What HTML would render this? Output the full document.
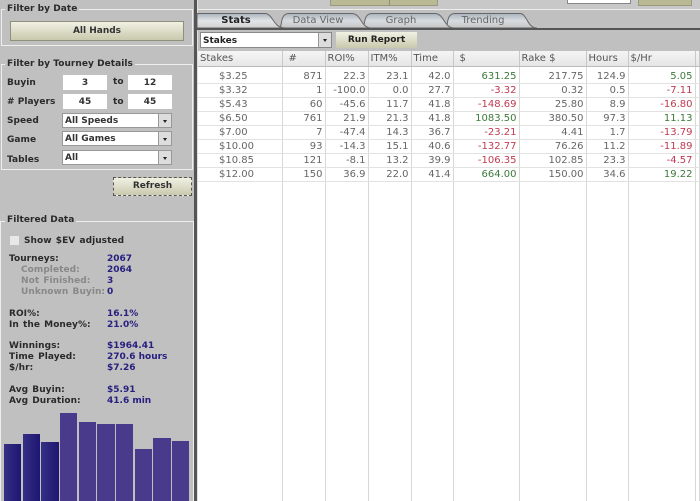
<!DOCTYPE html>
<html><head><meta charset="utf-8">
<style>
html,body{margin:0;padding:0;width:700px;height:501px;overflow:hidden;background:#c0c0c0}
body{position:relative;font-family:"DejaVu Sans","Liberation Sans",sans-serif;font-size:9px;color:#222;filter:blur(.3px)}
.a{position:absolute;white-space:nowrap}
.b{font-weight:bold}
.t{position:absolute;white-space:nowrap;font-weight:bold;font-size:9px;letter-spacing:.05px;color:#2a2a2a;line-height:12px}
.box{position:absolute;border:1px solid #eee;box-sizing:border-box}
.leg{position:absolute;background:#c0c0c0;font-weight:bold;font-size:9px;letter-spacing:.05px;line-height:12px;padding:0 2px;white-space:nowrap;color:#2a2a2a}
.inp{position:absolute;background:#fff;text-align:center;font-weight:bold;font-size:9px;line-height:16px;height:15px;width:44px;color:#333}
.sel{position:absolute;left:62px;width:110px;height:15px;background:#fff;border:1px solid #999;box-sizing:border-box;font-weight:bold;font-size:9px;line-height:15px;padding-left:2px;color:#333}
.sel i{position:absolute;right:0;top:0;width:12px;height:13px;background:#ddd;border-left:1px solid #999}
.sel i:after{content:"";position:absolute;left:4px;top:6px;border:2px solid transparent;border-top:3px solid #222;border-bottom:0}
.btn{position:absolute;background:linear-gradient(#f1f1e4,#c9c9ae);box-sizing:border-box;border:1px solid #8f8f7c;text-align:center;font-weight:bold;font-size:9px;color:#333}
.bar{position:absolute;bottom:0;background:#4a3a8c}
.bd{background:linear-gradient(90deg,#352f85,#1e1670)}
.k{position:absolute;left:9px;white-space:nowrap;font-weight:bold;font-size:9px;letter-spacing:.05px;word-spacing:1px;line-height:11px;color:#2a2a2a}
.g{color:#888}
.v{position:absolute;left:107px;white-space:nowrap;font-weight:bold;font-size:9px;letter-spacing:0;line-height:11px;color:#27207f}
table{position:absolute;left:198px;top:51px;border-collapse:collapse;table-layout:fixed;width:501px;background:#fff;font-size:10px;color:#666}
td,th{padding:0 2px 0 3px;border-right:1px solid #d8d8d8;height:13px;line-height:13px;border-bottom:1px solid #e2e2e2;overflow:hidden;white-space:nowrap;text-align:right;box-sizing:border-box}
th{font-weight:normal;text-align:left;height:15px;background:linear-gradient(#f5f5f5,#e6e6e6);color:#555;border-right:1px solid #c8c8c8;border-bottom:1px solid #bbb;padding-left:2px}
td:first-child{text-align:left;padding-left:21px}
tr.f td{padding-top:3px;height:17px}
.p{color:#3c7a3c}.n{color:#c03a50}
.tl{position:absolute;top:14px;line-height:13px;font-size:10px;color:#666;white-space:nowrap;transform:translateX(-50%)}
</style></head><body>

<!-- sidebar -->
<div class="box" style="left:1px;top:9px;width:192px;height:37px"></div>
<div class="leg" style="left:5px;top:3px">Filter by Date</div>
<div class="btn" style="left:10px;top:21px;width:174px;height:20px;line-height:19px">All Hands</div>

<div class="box" style="left:1px;top:64px;width:192px;height:106px"></div>
<div class="leg" style="left:5px;top:58px">Filter by Tourney Details</div>
<div class="t" style="left:7px;top:77px">Buyin</div>
<div class="inp" style="left:63px;top:75px">3</div>
<div class="t" style="left:113px;top:76px">to</div>
<div class="inp" style="left:128px;top:75px">12</div>
<div class="t" style="left:7px;top:96px"># Players</div>
<div class="inp" style="left:63px;top:94px">45</div>
<div class="t" style="left:113px;top:96px">to</div>
<div class="inp" style="left:128px;top:94px">45</div>
<div class="t" style="left:7px;top:115px">Speed</div>
<div class="sel" style="top:113px">All Speeds<i></i></div>
<div class="t" style="left:7px;top:134px">Game</div>
<div class="sel" style="top:131px">All Games<i></i></div>
<div class="t" style="left:7px;top:154px">Tables</div>
<div class="sel" style="top:150px">All<i></i></div>
<div class="btn" style="left:113px;top:177px;width:79px;height:19px;line-height:17px;border:1px dashed #555">Refresh</div>

<div class="box" style="left:0;top:221px;width:194px;height:290px;border-right:1px solid #eee"></div>
<div class="leg" style="left:5px;top:214px">Filtered Data</div>
<div class="a" style="left:10px;top:236px;width:9px;height:9px;background:#e8e8e8"></div>
<div class="k" style="left:24px;top:236px">Show $EV adjusted</div>
<div class="k" style="top:254px">Tourneys:</div><div class="v" style="top:254px">2067</div>
<div class="k g" style="left:21px;top:265px">Completed:</div><div class="v" style="top:265px">2064</div>
<div class="k g" style="left:21px;top:276px">Not Finished:</div><div class="v" style="top:276px">3</div>
<div class="k g" style="left:21px;top:287px">Unknown Buyin:</div><div class="v" style="top:287px">0</div>
<div class="k" style="top:309px">ROI%:</div><div class="v" style="top:309px">16.1%</div>
<div class="k" style="top:320px">In the Money%:</div><div class="v" style="top:320px">21.0%</div>
<div class="k" style="top:341px">Winnings:</div><div class="v" style="top:341px">$1964.41</div>
<div class="k" style="top:352px">Time Played:</div><div class="v" style="top:352px">270.6 hours</div>
<div class="k" style="top:363px">$/hr:</div><div class="v" style="top:363px">$7.26</div>
<div class="k" style="top:385px">Avg Buyin:</div><div class="v" style="top:385px">$5.91</div>
<div class="k" style="top:396px">Avg Duration:</div><div class="v" style="top:396px">41.6 min</div>

<div class="bar bd" style="left:4px;width:17px;height:57px"></div>
<div class="bar bd" style="left:23px;width:17px;height:67px"></div>
<div class="bar bd" style="left:41px;width:18px;height:59px"></div>
<div class="bar" style="left:60px;width:17px;height:88px"></div>
<div class="bar" style="left:79px;width:17px;height:79px"></div>
<div class="bar" style="left:97px;width:18px;height:77px"></div>
<div class="bar" style="left:116px;width:17px;height:77px"></div>
<div class="bar" style="left:135px;width:17px;height:52px"></div>
<div class="bar" style="left:153px;width:18px;height:63px"></div>
<div class="bar" style="left:172px;width:17px;height:60px"></div>

<!-- separator -->
<div class="a" style="left:194px;top:0;width:3px;height:501px;background:#555"></div>
<div class="a" style="left:197px;top:0;width:1px;height:501px;background:#e0e0e0"></div>

<!-- top strip -->
<div class="a" style="left:198px;top:0;width:502px;height:9px;background:#c8c8c8;border-bottom:1px solid #eee"></div>
<div class="a" style="left:330px;top:0;width:106px;height:5px;background:#b9b996;border:1px solid #99997c;border-top:0"></div>
<div class="a" style="left:389px;top:0;width:1px;height:5px;background:#8e8e74"></div>
<div class="a" style="left:567px;top:0;width:62px;height:3px;background:#fff;border:1px solid #888;border-top:0"></div>
<div class="a" style="left:638px;top:0;width:52px;height:5px;background:#b9b996;border:1px solid #99997c;border-top:0"></div>

<!-- tabs -->
<svg class="a" style="left:197px;top:10px" width="503" height="21" viewBox="0 0 503 21">
<defs>
<linearGradient id="g1" x1="0" y1="0" x2="0" y2="1"><stop offset="0" stop-color="#a9b3be"/><stop offset=".5" stop-color="#e2e5e8"/><stop offset="1" stop-color="#d0d0d0"/></linearGradient>
<linearGradient id="g2" x1="0" y1="0" x2="0" y2="1"><stop offset="0" stop-color="#a9b3be"/><stop offset=".5" stop-color="#d8dce0"/><stop offset="1" stop-color="#c4c4c4"/></linearGradient>
</defs>
<path d="M248 18C252 18 248 3.500 258 3.500H323C330 3.500 330 18 340 18Z" fill="url(#g2)" stroke="#666"/>
<path d="M165 18C169 18 165 3.500 175 3.500H238C247 3.500 247 18 257 18Z" fill="url(#g2)" stroke="#666"/>
<path d="M82 18C86 18 82 3.500 92 3.500H155C164 3.500 164 18 174 18Z" fill="url(#g2)" stroke="#666"/>
<path d="M0 18V3.500H68C76 3.500 76 18 88 18Z" fill="url(#g1)" stroke="#666"/>
<rect x="0" y="18" width="503" height="2" fill="#555"/>
</svg>
<div class="tl b" style="left:236px;color:#222">Stats</div>
<div class="tl" style="left:318px">Data View</div>
<div class="tl" style="left:401px">Graph</div>
<div class="tl" style="left:483px">Trending</div>

<!-- toolbar -->
<div class="sel" style="left:200px;top:32px;width:132px;height:16px;color:#222;border:1px solid #888;line-height:16px">Stakes<i style="height:14px"></i></div>
<div class="btn" style="left:336px;top:32px;width:81px;height:16px;line-height:16px;color:#222;border:0">Run Report</div>

<!-- table -->
<table>
<colgroup><col style="width:84px"><col style="width:43px"><col style="width:43px"><col style="width:43px"><col style="width:42px"><col style="width:66px"><col style="width:67px"><col style="width:42px"><col style="width:67px"><col style="width:4px"></colgroup>
<tr><th>Stakes</th><th style="padding-left:6px">#</th><th>ROI%</th><th>ITM%</th><th>Time</th><th style="padding-left:6px">$</th><th>Rake $</th><th>Hours</th><th>$/Hr</th><th></th></tr>
<tr class="f"><td>$3.25</td><td>871</td><td>22.3</td><td>23.1</td><td>42.0</td><td class="p">631.25</td><td>217.75</td><td>124.9</td><td class="p">5.05</td><td></td></tr>
<tr><td>$3.32</td><td>1</td><td>-100.0</td><td>0.0</td><td>27.7</td><td class="n">-3.32</td><td>0.32</td><td>0.5</td><td class="n">-7.11</td><td></td></tr>
<tr><td>$5.43</td><td>60</td><td>-45.6</td><td>11.7</td><td>41.8</td><td class="n">-148.69</td><td>25.80</td><td>8.9</td><td class="n">-16.80</td><td></td></tr>
<tr><td>$6.50</td><td>761</td><td>21.9</td><td>21.3</td><td>41.8</td><td class="p">1083.50</td><td>380.50</td><td>97.3</td><td class="p">11.13</td><td></td></tr>
<tr><td>$7.00</td><td>7</td><td>-47.4</td><td>14.3</td><td>36.7</td><td class="n">-23.21</td><td>4.41</td><td>1.7</td><td class="n">-13.79</td><td></td></tr>
<tr><td>$10.00</td><td>93</td><td>-14.3</td><td>15.1</td><td>40.6</td><td class="n">-132.77</td><td>76.26</td><td>11.2</td><td class="n">-11.89</td><td></td></tr>
<tr><td>$10.85</td><td>121</td><td>-8.1</td><td>13.2</td><td>39.9</td><td class="n">-106.35</td><td>102.85</td><td>23.3</td><td class="n">-4.57</td><td></td></tr>
<tr><td>$12.00</td><td>150</td><td>36.9</td><td>22.0</td><td>41.4</td><td class="p">664.00</td><td>150.00</td><td>34.6</td><td class="p">19.22</td><td></td></tr>
<tr><td style="height:340px;border-bottom:0"></td><td style="height:340px;border-bottom:0"></td><td style="border-bottom:0"></td><td style="border-bottom:0"></td><td style="border-bottom:0"></td><td style="border-bottom:0"></td><td style="border-bottom:0"></td><td style="border-bottom:0"></td><td style="border-bottom:0"></td><td style="border-bottom:0"></td></tr>
</table>
</body></html>
